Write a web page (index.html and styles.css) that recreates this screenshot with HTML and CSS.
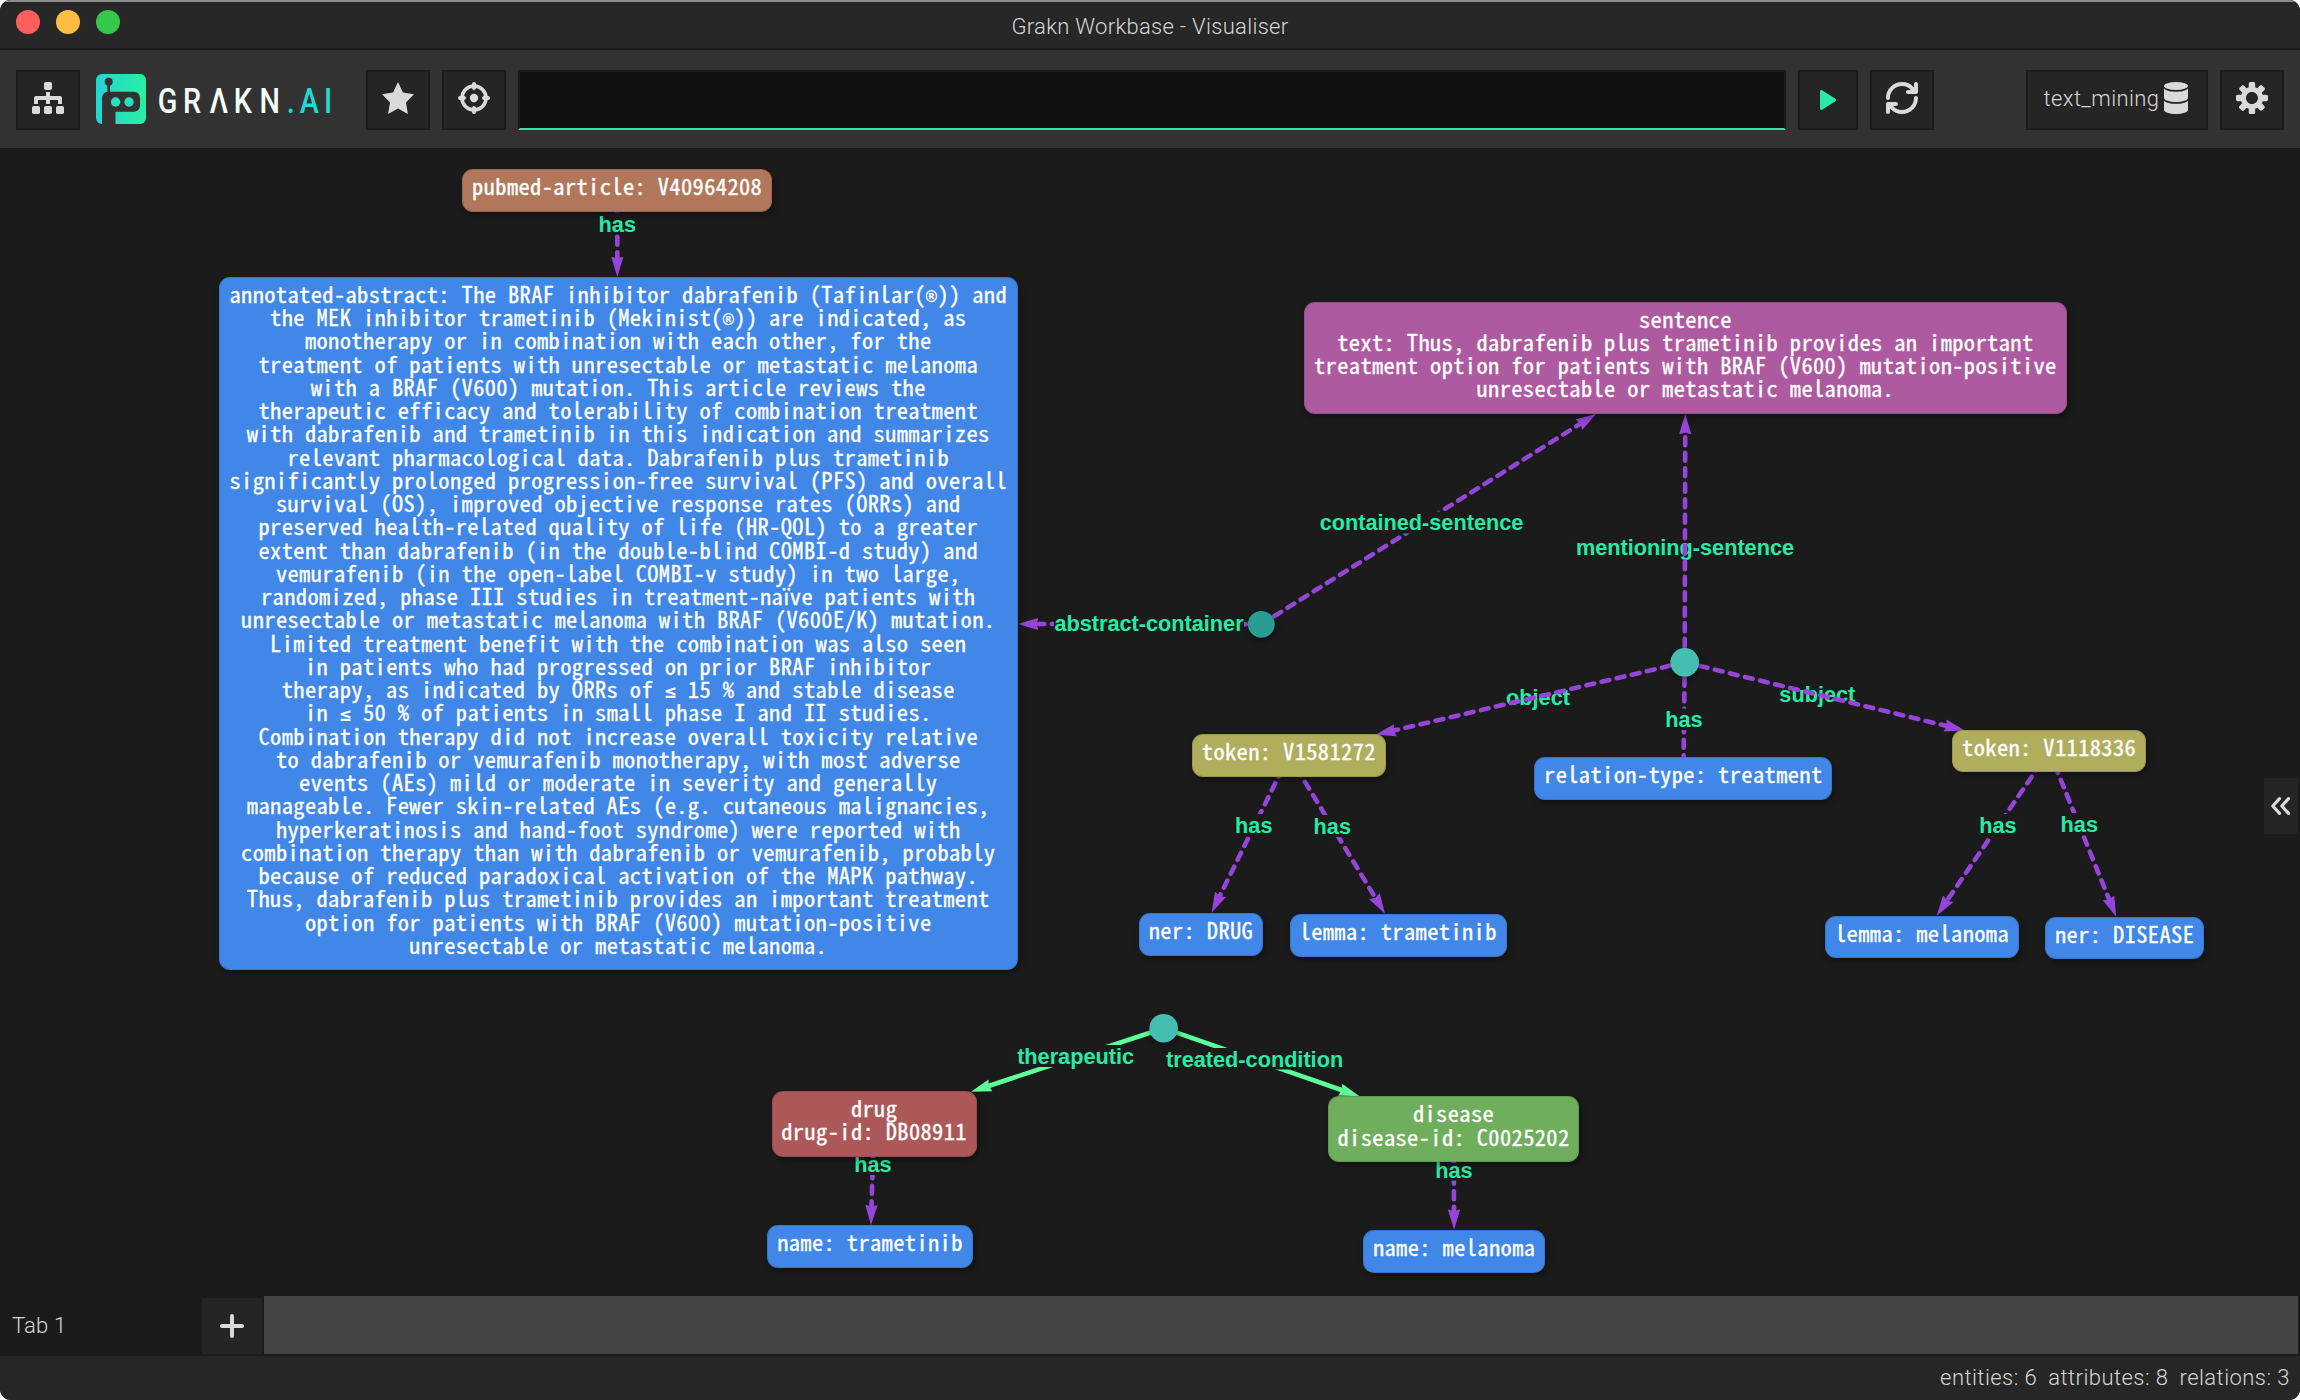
FILE: index.html
```html
<!DOCTYPE html>
<html lang="en">
<head>
<meta charset="utf-8">
<title>Grakn Workbase - Visualiser</title>
<link rel="stylesheet" href="styles.css">
</head>
<body>
<div class="window">
  <header class="titlebar">
    <div class="lights"><i class="light close"></i><i class="light minimise"></i><i class="light zoom"></i></div>
    <h1 class="title">Grakn Workbase - Visualiser</h1>
  </header>

  <nav class="toolbar">
    <button class="btn"><svg class="icon" viewBox="0 0 32 32"><rect x="12" y="0" width="8" height="8" rx="1.8"/><rect x="0" y="24" width="8" height="8" rx="1.8"/><rect x="12" y="24" width="8" height="8" rx="1.8"/><rect x="24" y="24" width="8" height="8" rx="1.8"/><path d="M14 10h4v4h10a2 2 0 0 1 2 2v6h-4v-4h-8v4h-4v-4H6v4H2v-6a2 2 0 0 1 2-2h10z"/></svg></button>
    <svg class="logo" viewBox="0 0 240 60">
      <defs><linearGradient id="brand"><stop offset="0" stop-color="#24d5d3"/><stop offset="1" stop-color="#29efa1"/></linearGradient></defs>
      <rect x="0" y="4" width="50" height="50" rx="6" fill="url(#brand)"/>
      <circle class="bot" cx="12.7" cy="11.7" r="4"/>
      <path class="bot" d="M11.4 12h2.6v9.7H38a6 6 0 0 1 6 6v8a6 6 0 0 1-6 6H20.5a1 1 0 0 0-1 1V54H6V27.700a6 6 0 0 1 5.400-6z"/>
      <circle class="eye" cx="19.600" cy="32" r="4.700"/><circle class="eye" cx="33" cy="32" r="4.700"/>
      <g transform="scale(.8 1)"><text class="word" x="77.100 108.700 141.800 172.300 204.500" y="42.800">GRΛKN</text><text class="word ai" x="238.300 254.700 285" y="42.800">.AI</text></g>
    </svg>
    <button class="btn"><svg class="icon" viewBox="0 0 16 16"><path d="M16 6.110l-5.530-.84L8 0 5.530 5.270 0 6.110l4 4.100L3.060 16 8 13.270 12.940 16 12 10.210l4-4.100z"/></svg></button>
    <button class="btn"><svg class="icon" viewBox="0 0 32 32"><circle class="ring" cx="16" cy="16" r="12"/><circle cx="16" cy="16" r="4.200"/><path class="tick" d="M16 2v4M16 26v4M2 16h4M26 16h4"/></svg></button>
    <input class="query" type="text" aria-label="Query">
    <button class="btn run"><svg class="play" viewBox="0 0 16 20"><path d="M0 1.500C0 .2 1.300-.4 2.400.4l12.700 8.200c1.200.8 1.200 2 0 2.800L2.400 19.600c-1.100.8-2.400.2-2.400-1.100z"/></svg></button>
    <button class="btn"><svg class="icon" viewBox="0 0 16 16"><path d="M14.990 6.990c-.55 0-1 .45-1 1 0 3.310-2.690 6-6 6-1.770 0-3.360-.78-4.460-2h1.460c.55 0 1-.45 1-1s-.45-1-1-1h-4c-.55 0-1 .45-1 1v4c0 .55.45 1 1 1s1-.45 1-1v-1.740a7.950 7.950 0 0 0 6 2.740c4.420 0 8-3.580 8-8 0-.55-.45-1-1-1zm0-7c-.55 0-1 .45-1 1v1.740a7.950 7.950 0 0 0-6-2.740c-4.420 0-8 3.580-8 8 0 .55.45 1 1 1s1-.45 1-1c0-3.310 2.690-6 6-6 1.770 0 3.360.78 4.460 2h-1.460c-.55 0-1 .45-1 1s.45 1 1 1h4c.55 0 1-.45 1-1v-4c0-.55-.45-1-1-1z"/></svg></button>
    <button class="btn keyspace"><span class="keyspace-name">text_mining</span><svg class="icon" viewBox="0 0 32 32"><ellipse cx="16" cy="4" rx="12" ry="4"/><path d="M4 6.500c2 2.400 7 3.300 12 3.300s10-.9 12-3.300V16c0 2.200-5.400 4-12 4S4 18.200 4 16zM4 18.700c2 2.100 7 3.100 12 3.100s10-1 12-3.100V28c0 2.200-5.400 4-12 4s-12-1.800-12-4z"/></svg></button>
    <button class="btn"><svg class="icon" viewBox="0 0 16 16"><path d="M15.190 6.390h-1.850c-.11-.37-.27-.71-.45-1.040l1.360-1.360c.31-.31.31-.82 0-1.130l-1.130-1.130a.803.803 0 0 0-1.130 0l-1.360 1.360c-.33-.17-.67-.33-1.040-.44V.79c0-.44-.36-.8-.8-.8h-1.600c-.44 0-.8.36-.8.8v1.860c-.39.12-.75.28-1.100.47l-1.300-1.300c-.3-.3-.79-.3-1.090 0L1.820 2.910c-.3.3-.3.79 0 1.090l1.300 1.300c-.2.34-.36.7-.48 1.090H.79c-.44 0-.8.36-.8.8v1.600c0 .44.36.8.8.8h1.850c.11.37.27.71.45 1.040l-1.360 1.360c-.31.31-.31.82 0 1.130l1.130 1.130c.31.31.82.31 1.130 0l1.360-1.360c.33.18.67.33 1.040.44v1.860c0 .44.36.8.8.8h1.600c.44 0 .8-.36.8-.8v-1.860c.39-.12.75-.28 1.100-.47l1.300 1.300c.3.3.79.3 1.090 0l1.090-1.090c.3-.3.3-.79 0-1.090l-1.300-1.300c.19-.35.36-.71.48-1.100h1.850c.44 0 .8-.36.8-.8v-1.600a.816.816 0 0 0-.81-.79zm-7.200 4.600c-1.660 0-3-1.340-3-3s1.340-3 3-3 3 1.340 3 3-1.340 3-3 3z"/></svg></button>
  </nav>

  <main class="canvas">
    <svg class="edges" viewBox="0 148 2300 1148">
      <defs>
        <marker id="tip" markerUnits="userSpaceOnUse" markerWidth="22" markerHeight="14" refX="4.500" refY="7" orient="auto"><path d="M0 .8L2 7 0 13.200 20.500 7z" fill="#9645d9"/></marker>
        <marker id="tip-green" markerUnits="userSpaceOnUse" markerWidth="22" markerHeight="14" refX="4.500" refY="7" orient="auto"><path d="M0 .8L2 7 0 13.200 20.500 7z" fill="#5cff98"/></marker>
      </defs>

      <!-- labels that their edge crosses -->
      <g class="label">
        <text x="1685" y="554.600">mentioning-sentence</text>
        <text x="1538" y="704.700">object</text>
        <text x="1817.300" y="702.400">subject</text>
      </g>

      <g class="edge">
        <path d="M617.300 190.400V261"/>
        <path d="M1261.300 624.300L1034 624"/>
        <path d="M1261.300 624.300L1582.700 422.300"/>
        <path d="M1684.700 662.300L1685.200 430"/>
        <path d="M1684.700 662.300L1391 731.200"/>
        <path d="M1684.700 662.300L1949.300 726.600"/>
        <path class="plain" d="M1684.700 662.300L1683.400 778"/>
        <path d="M1288.900 755.400L1218.600 898.400"/>
        <path d="M1288.900 755.400L1376.700 900"/>
        <path d="M2049.200 751.100L1945.700 902.500"/>
        <path d="M2049.200 751.100L2110.200 902"/>
        <path d="M874.100 1123.900L871.400 1209.200"/>
        <path d="M1453.600 1129.300L1454 1213.700"/>
      </g>
      <g class="edge inferred">
        <path d="M1163.700 1028.200L986.200 1086.700"/>
        <path d="M1163.700 1028.200L1344.400 1091"/>
      </g>

      <!-- labels that cut their edge -->
      <g class="gap">
        <rect x="598" y="212.500" width="39" height="21"/>
        <rect x="1054" y="612" width="190" height="22"/>
        <rect x="1318" y="511.500" width="207" height="22"/>
        <rect x="1665" y="708.500" width="38" height="21.500"/>
        <rect x="1235" y="814" width="38" height="22.500"/>
        <rect x="1313" y="815" width="38" height="22"/>
        <rect x="1979" y="814" width="38" height="22.500"/>
        <rect x="2060" y="813" width="38" height="22.500"/>
        <rect x="1014" y="1045" width="123" height="22"/>
        <rect x="1163" y="1048" width="183" height="21.500"/>
        <rect x="854" y="1158" width="38" height="17"/>
        <rect x="1435" y="1163" width="38" height="17.500"/>
      </g>
      <g class="label">
        <text x="617.300" y="232">has</text>
        <text x="1149" y="631.400">abstract-container</text>
        <text x="1421.500" y="530.400">contained-sentence</text>
        <text x="1684" y="727.400">has</text>
        <text x="1253.800" y="833.400">has</text>
        <text x="1332.300" y="834.400">has</text>
        <text x="1998" y="833.400">has</text>
        <text x="2079.300" y="832.400">has</text>
        <text x="1075.600" y="1064.400">therapeutic</text>
        <text x="1254.600" y="1067.400">treated-condition</text>
        <text x="873" y="1172.400">has</text>
        <text x="1453.900" y="1178.400">has</text>
      </g>

      <circle class="relation muted" cx="1261.300" cy="624.300" r="13.400"/>
      <circle class="relation" cx="1684.700" cy="662.300" r="14.300"/>
      <circle class="relation" cx="1163.700" cy="1028.200" r="14.300"/>
    </svg>

    <div class="node article n-article"><pre>pubmed-article: V40964208</pre></div>
    <div class="node n-abstract"><pre>annotated-abstract: The BRAF inhibitor dabrafenib (Tafinlar(<b class="sym">®</b>)) and
the MEK inhibitor trametinib (Mekinist(<b class="sym">®</b>)) are indicated, as
monotherapy or in combination with each other, for the
treatment of patients with unresectable or metastatic melanoma
with a BRAF (V600) mutation. This article reviews the
therapeutic efficacy and tolerability of combination treatment
with dabrafenib and trametinib in this indication and summarizes
relevant pharmacological data. Dabrafenib plus trametinib
significantly prolonged progression-free survival (PFS) and overall
survival (OS), improved objective response rates (ORRs) and
preserved health-related quality of life (HR-QOL) to a greater
extent than dabrafenib (in the double-blind COMBI-d study) and
vemurafenib (in the open-label COMBI-v study) in two large,
randomized, phase III studies in treatment-naïve patients with
unresectable or metastatic melanoma with BRAF (V600E/K) mutation.
Limited treatment benefit with the combination was also seen
in patients who had progressed on prior BRAF inhibitor
therapy, as indicated by ORRs of <b class="sym">≤</b> 15 % and stable disease
in <b class="sym">≤</b> 50 % of patients in small phase I and II studies.
Combination therapy did not increase overall toxicity relative
to dabrafenib or vemurafenib monotherapy, with most adverse
events (AEs) mild or moderate in severity and generally
manageable. Fewer skin-related AEs (e.g. cutaneous malignancies,
hyperkeratinosis and hand-foot syndrome) were reported with
combination therapy than with dabrafenib or vemurafenib, probably
because of reduced paradoxical activation of the MAPK pathway.
Thus, dabrafenib plus trametinib provides an important treatment
option for patients with BRAF (V600) mutation-positive
unresectable or metastatic melanoma.</pre></div>
    <div class="node sentence n-sentence"><pre>sentence
text: Thus, dabrafenib plus trametinib provides an important
treatment option for patients with BRAF (V600) mutation-positive
unresectable or metastatic melanoma.</pre></div>
    <div class="node token n-token-a"><pre>token: V1581272</pre></div>
    <div class="node n-reltype"><pre>relation-type: treatment</pre></div>
    <div class="node token n-token-b"><pre>token: V1118336</pre></div>
    <div class="node n-ner-a"><pre>ner: DRUG</pre></div>
    <div class="node n-lemma-a"><pre>lemma: trametinib</pre></div>
    <div class="node n-lemma-b"><pre>lemma: melanoma</pre></div>
    <div class="node n-ner-b"><pre>ner: DISEASE</pre></div>
    <div class="node drug n-drug"><pre>drug
drug-id: DB08911</pre></div>
    <div class="node disease n-disease"><pre>disease
disease-id: C0025202</pre></div>
    <div class="node n-name-a"><pre>name: trametinib</pre></div>
    <div class="node n-name-b"><pre>name: melanoma</pre></div>

    <button class="drawer"><svg class="chevrons" viewBox="0 0 20 18"><path d="M8.500 1.700L1.800 9l6.700 7.300M17.500 1.700L10.800 9l6.700 7.300"/></svg></button>
  </main>

  <div class="tabs">
    <div class="tab">Tab 1</div>
    <button class="add"><svg class="plus" viewBox="0 0 24 24"><path d="M12 2v20M2 12h20"/></svg></button>
    <div class="strip"></div>
  </div>

  <footer class="status"><span>entities: 6</span><span>attributes: 8</span><span>relations: 3</span></footer>
</div>
</body>
</html>
```
FILE: styles.css
```css
* { box-sizing: border-box; }

body { margin: 0; background: #fff; }

button { padding: 0; font: inherit; color: inherit; }

.window {
  width: 2300px;
  height: 1400px;
  display: flex;
  flex-direction: column;
  overflow: hidden;
  border-radius: 11px;
  background: #1b1b1b;
  color: #d6d6d6;
  font: 300 22px/28px Roboto, sans-serif;
}

.titlebar {
  height: 50px;
  display: grid;
  grid-template-columns: 1fr auto 1fr;
  background: #272727;
  border-top: 2px solid #8c8c8c;
  border-bottom: 2px solid #1b1b1b;
}
.lights { display: flex; gap: 16px; padding: 8px 16px; }
.light { width: 24px; height: 24px; border-radius: 50%; }
.close { background: #ff5f5b; }
.minimise { background: #febd41; }
.zoom { background: #35c84a; }
.title { margin: 0; padding-top: 11px; font: inherit; letter-spacing: .3px; }

.toolbar {
  height: 98px;
  display: flex;
  align-items: center;
  gap: 12px;
  padding: 2px 16px 0;
  background: #323232;
}
.btn {
  width: 64px;
  height: 60px;
  display: flex;
  align-items: center;
  justify-content: center;
  background: #252525;
  border: 2px solid #1b1b1b;
  padding-bottom: 4px;
}
.icon { width: 32px; height: 32px; fill: #dadada; overflow: visible; }
.ring { fill: none; stroke: #dadada; stroke-width: 3.6; }
.tick { stroke: #dadada; stroke-width: 4; stroke-linecap: round; }
.logo { width: 240px; height: 60px; margin: 0 18px 0 4px; }
.bot { fill: #323232; }
.eye { fill: #27e0be; }
.word { font: 500 36px Roboto, sans-serif; fill: #f4fffc; }
.ai { fill: #25d9d0; }
.query {
  width: 1268px;
  height: 60px;
  background: #0f0f0f;
  border: 2px solid #1b1b1b;
  border-bottom-color: #27eba5;
  outline: none;
}
.run { width: 60px; padding: 0; }
.play { width: 16px; height: 20px; fill: #27eba5; }
.keyspace { width: 182px; margin-left: auto; gap: 1px; padding-left: 2px; }
.keyspace-name { letter-spacing: .4px; padding-top: 2px; }

.canvas { position: relative; height: 1148px; background: #1b1b1b; }
.edges { display: block; width: 2300px; height: 1148px; }
.edge path {
  fill: none;
  stroke: #9645d9;
  stroke-width: 4.6;
  stroke-linecap: round;
  stroke-dasharray: 7.9 7.6;
  marker-end: url(#tip);
}
.edge .plain { marker-end: none; }
.inferred path { stroke: #5cff98; stroke-dasharray: none; marker-end: url(#tip-green); }
.gap rect { fill: #1b1b1b; }
.label text {
  font: 700 21.7px "Liberation Sans", Arial, sans-serif;
  fill: #27eba5;
  text-anchor: middle;
}
.relation { fill: #45bdb1; filter: drop-shadow(1px 3px 3px rgba(0, 0, 0, .4)); }
.muted { fill: #2a9d92; }

.node {
  position: absolute;
  display: flex;
  justify-content: center;
  height: 42.7px;
  padding-top: 5px;
  border-radius: 11px;
  background: #4087e7;
  color: #fff;
  box-shadow: inset 0 0 0 1px rgba(0, 0, 0, .12), 2px 3px 6px rgba(0, 0, 0, .35);
}
.node pre {
  margin: 0;
  flex: none;
  font: 400 22.4px/23.25px "Noto Sans Mono CJK JP", "DejaVu Sans Mono", monospace;
  letter-spacing: .41px;
  text-align: center;
  -webkit-text-stroke: .35px #fff;
}
.sym {
  font: 700 18.6px/0 "DejaVu Sans Mono", monospace;
  -webkit-text-stroke: 0;
}
.article { background: #b0775a; }
.sentence { background: #ae5aa0; }
.token { background: #b0ad5c; }
.drug { background: #ac5859; }
.disease { background: #6fae5c; }

/* node positions on the canvas */
.n-article { left: 462.300px; top: 21px; width: 309.700px; }
.n-abstract { left: 219px; top: 128.800px; width: 798.500px; height: 693.500px; }
.n-sentence { left: 1304px; top: 153.700px; width: 762.700px; height: 112.300px; }
.n-token-a { left: 1192px; top: 586px; width: 193.700px; }
.n-reltype { left: 1534.300px; top: 609px; width: 298px; }
.n-token-b { left: 1952.300px; top: 581.700px; width: 193.700px; }
.n-ner-a { left: 1139px; top: 765px; width: 124px; }
.n-lemma-a { left: 1289.700px; top: 766px; width: 217px; }
.n-lemma-b { left: 1825.300px; top: 767.700px; width: 193.500px; }
.n-ner-b { left: 2045.300px; top: 768.700px; width: 158.700px; }
.n-drug { left: 771.500px; top: 943px; width: 205.200px; height: 65.800px; }
.n-disease { left: 1327.700px; top: 948.300px; width: 251.700px; height: 65.800px; }
.n-name-a { left: 767.400px; top: 1077.300px; width: 205.200px; }
.n-name-b { left: 1363.400px; top: 1082px; width: 181.500px; }

.drawer {
  position: absolute;
  top: 630px;
  right: 2px;
  width: 34px;
  height: 56px;
  display: flex;
  align-items: center;
  justify-content: center;
  background: #252525;
  border: 0;
}
.chevrons { width: 20px; height: 18px; fill: none; stroke: #dadada; stroke-width: 3.2; stroke-linecap: round; stroke-linejoin: round; }

.tabs { height: 60px; display: flex; border-bottom: 2px solid #1b1b1b; padding-right: 2px; }
.tab { width: 202px; padding: 16px 12px; letter-spacing: .2px; }
.add {
  width: 60px;
  margin: 2px 2px 0 0;
  display: flex;
  align-items: center;
  justify-content: center;
  background: #252525;
  border: 0;
}
.plus { width: 24px; height: 24px; stroke: #dadada; stroke-width: 4; stroke-linecap: round; }
.strip { flex: 1; background: #444; }

.status {
  height: 44px;
  display: flex;
  justify-content: flex-end;
  gap: 11px;
  padding: 8px 10px;
  background: #262626;
  letter-spacing: .45px;
}
```
